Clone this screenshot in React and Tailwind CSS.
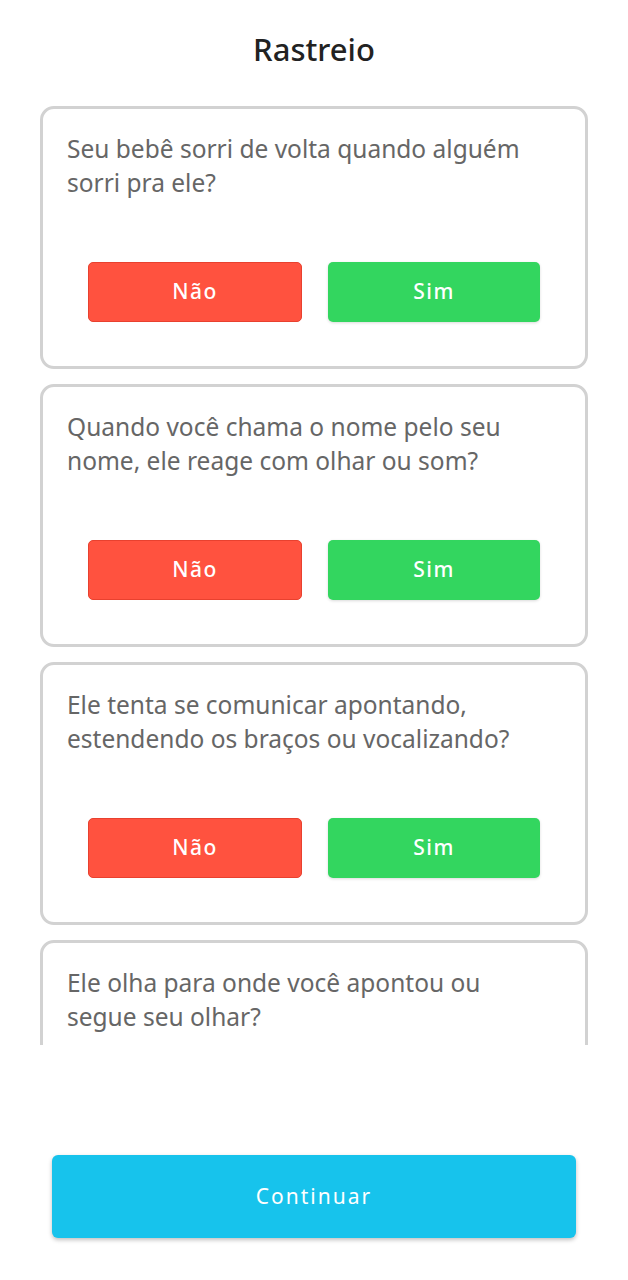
import React from 'react';

const questions = [
    "Seu bebê sorri de volta quando alguém sorri pra ele?",
    "Quando você chama o nome pelo seu nome, ele reage com olhar ou som?",
    "Ele tenta se comunicar apontando, estendendo os braços ou vocalizando?",
    "Ele olha para onde você apontou ou segue seu olhar?",
];

function QuestionCard({ text }) {
    return (
        <div className="shrink-0 border-[3px] border-[#d2d2d2] rounded-[14px] bg-white pt-[23px] px-6 pb-[44px]">
            <p className="text-[24.5px] leading-[34px] text-[#666666] h-[68px] max-w-[472px] font-['Noto_Sans',sans-serif]">{text}</p>
            <div className="flex gap-[26px] px-[21px] mt-[62px]">
                <button className="flex-1 h-[60px] rounded-[5px] bg-[#ff523f] border border-[#e8412f] text-white text-[21px] tracking-[1.5px] font-medium font-['Noto_Sans',sans-serif]">
                    Não
                </button>
                <button className="flex-1 h-[60px] rounded-[5px] bg-[#33d65f] text-white text-[21px] tracking-[1.5px] font-medium shadow-[0_1px_3px_rgba(0,0,0,0.15)] font-['Noto_Sans',sans-serif]">
                    Sim
                </button>
            </div>
        </div>
    );
}

export default function App() {
    return (
        <div className="w-[628px] h-[1280px] bg-white flex flex-col font-['Noto_Sans',sans-serif]">
            {/* Header */}
            <div className="h-[100px] flex items-center justify-center pb-[2px]">
                <h1 className="text-[31px] font-medium text-[#222222]">Rastreio</h1>
            </div>

            {/* Scrollable list */}
            <div className="h-[945px] overflow-hidden px-10 pt-[6px] flex flex-col gap-[15px]">
                {questions.map((q, i) => (
                    <QuestionCard key={i} text={q} />
                ))}
            </div>

            {/* Footer */}
            <div className="flex-1 flex items-end px-[52px] pb-[42px]">
                <button className="w-full h-[83px] rounded-[6px] bg-[#17c3ec] text-white text-[21px] tracking-[2px] shadow-[0_2px_4px_rgba(0,0,0,0.25)]">
                    Continuar
                </button>
            </div>
        </div>
    );
}
